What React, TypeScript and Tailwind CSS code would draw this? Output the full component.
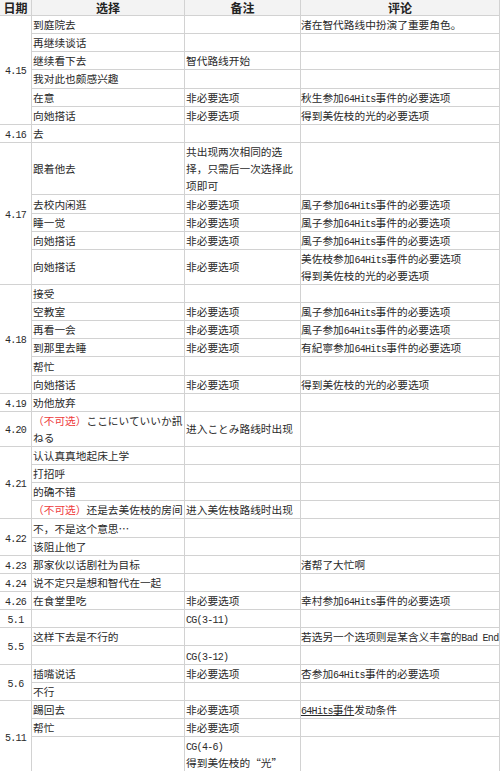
import type { ReactNode } from "react";

// 64Hits / CG / dates use half-width mono glyphs, like the original bitmap font
function L({ children }: { children: ReactNode }) {
  return (
    <span className="font-['Liberation_Mono','Noto_Sans_CJK_SC',monospace] text-[10px] leading-[1] tracking-[-0.7px]">
      {children}
    </span>
  );
}

function Red({ children }: { children: ReactNode }) {
  return <span className="text-[#ee3b3b]">{children}</span>;
}

type Row = { c?: ReactNode; n?: ReactNode; m?: ReactNode; h?: number };
type Group = { date: string; rows: Row[] };

const fuuko = (
  <>
    風子参加<L>64Hits</L>事件的必要选项
  </>
);

const groups: Group[] = [
  {
    date: "4.15",
    rows: [
      { c: "到庭院去", m: "渚在智代路线中扮演了重要角色。" },
      { c: "再继续谈话" },
      { c: "继续看下去", n: "智代路线开始" },
      { c: "我对此也颇感兴趣" },
      { c: "在意", n: "非必要选项", m: <>秋生参加<L>64Hits</L>事件的必要选项</> },
      { c: "向她搭话", n: "非必要选项", m: "得到美佐枝的光的必要选项" },
    ],
  },
  { date: "4.16", rows: [{ c: "去" }] },
  {
    date: "4.17",
    rows: [
      {
        c: "跟着他去",
        n: (
          <>
            共出现两次相同的选
            <br />
            择，只需后一次选择此
            <br />
            项即可
          </>
        ),
        h: 52.5,
      },
      { c: "去校内闲逛", n: "非必要选项", m: fuuko },
      { c: "睡一觉", n: "非必要选项", m: fuuko },
      { c: "向她搭话", n: "非必要选项", m: fuuko },
      {
        c: "向她搭话",
        n: "非必要选项",
        m: (
          <>
            美佐枝参加<L>64Hits</L>事件的必要选项
            <br />
            得到美佐枝的光的必要选项
          </>
        ),
        h: 34.5,
      },
    ],
  },
  {
    date: "4.18",
    rows: [
      { c: "接受" },
      { c: "空教室", n: "非必要选项", m: fuuko },
      { c: "再看一会", n: "非必要选项", m: fuuko },
      { c: "到那里去睡", n: "非必要选项", m: <>有紀寧参加<L>64Hits</L>事件的必要选项</> },
      { c: "帮忙" },
      { c: "向她搭话", n: "非必要选项", m: "得到美佐枝的光的必要选项" },
    ],
  },
  { date: "4.19", rows: [{ c: "劝他放弃" }] },
  {
    date: "4.20",
    rows: [
      {
        c: (
          <>
            <Red>（不可选）</Red>ここにいていいか訊
            <br />
            ねる
          </>
        ),
        n: "进入ことみ路线时出现",
        h: 35,
      },
    ],
  },
  {
    date: "4.21",
    rows: [
      { c: "认认真真地起床上学" },
      { c: "打招呼" },
      { c: "的确不错" },
      {
        c: (
          <>
            <Red>（不可选）</Red>还是去美佐枝的房间
          </>
        ),
        n: "进入美佐枝路线时出现",
      },
    ],
  },
  { date: "4.22", rows: [{ c: "不，不是这个意思…" }, { c: "该阻止他了" }] },
  { date: "4.23", rows: [{ c: "那家伙以话剧社为目标", m: "渚帮了大忙啊" }] },
  { date: "4.24", rows: [{ c: "说不定只是想和智代在一起" }] },
  {
    date: "4.26",
    rows: [{ c: "在食堂里吃", n: "非必要选项", m: <>幸村参加<L>64Hits</L>事件的必要选项</> }],
  },
  { date: "5.1", rows: [{ n: <L>CG(3-11)</L> }] },
  {
    date: "5.5",
    rows: [
      { c: "这样下去是不行的", m: <>若选另一个选项则是某含义丰富的<L>Bad End</L></> },
      { n: <L>CG(3-12)</L> },
    ],
  },
  {
    date: "5.6",
    rows: [
      { c: "插嘴说话", n: "非必要选项", m: <>杏参加<L>64Hits</L>事件的必要选项</> },
      { c: "不行" },
    ],
  },
  {
    date: "5.11",
    rows: [
      {
        c: "踢回去",
        n: "非必要选项",
        m: (
          <>
            <span className="underline">
              <L>64Hits</L>事件
            </span>
            发动条件
          </>
        ),
      },
      { c: "帮忙", n: "非必要选项" },
      {
        n: (
          <>
            <L>CG(4-6)</L>
            <br />
            得到美佐枝的“光”
          </>
        ),
        h: 35,
      },
    ],
  },
];

const cell = "border-r border-b border-[#d2d2d2] px-[1px] py-0 align-middle whitespace-nowrap";

export default function App() {
  return (
    <div className="w-[500px] overflow-hidden bg-white">
      <table className="w-[500px] table-fixed border-separate border-spacing-0 font-['Noto_Sans_CJK_SC',sans-serif] text-[10.7px] leading-[17px] text-[#2a2a2a]">
        <colgroup>
          <col className="w-[32px]" />
          <col className="w-[153px]" />
          <col className="w-[116px]" />
          <col className="w-[199px]" />
        </colgroup>
        <thead>
          <tr className="h-[16px] bg-[#f3f3f3] text-[12px] leading-[15px] font-bold text-[#222]">
            <th className={`${cell} text-center`}>日期</th>
            <th className={`${cell} text-center`}>选择</th>
            <th className={`${cell} text-center`}>备注</th>
            <th className={`${cell} text-center`}>评论</th>
          </tr>
        </thead>
        <tbody>
          {groups.map((g) =>
            g.rows.map((r, i) => (
              <tr key={g.date + i} style={{ height: r.h ?? 18.15 }}>
                {i === 0 ? (
                  <td rowSpan={g.rows.length} className={`${cell} text-center`}>
                    <L>{g.date}</L>
                  </td>
                ) : null}
                <td className={cell}>{r.c}</td>
                <td className={cell}>{r.n}</td>
                <td className={`${cell} pl-0`}>{r.m}</td>
              </tr>
            ))
          )}
        </tbody>
      </table>
    </div>
  );
}
